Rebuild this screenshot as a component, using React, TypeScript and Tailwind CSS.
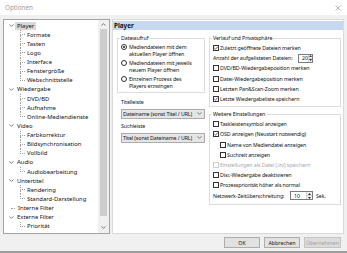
import React from 'react';

type Node = { label: string; children: string[]; selected?: boolean };

const tree: Node[] = [
  { label: 'Player', selected: true, children: ['Formate', 'Tasten', 'Logo', 'Interface', 'Fenstergröße', 'Webschnittstelle'] },
  { label: 'Wiedergabe', children: ['DVD/BD', 'Aufnahme', 'Online-Mediendienste'] },
  { label: 'Video', children: ['Farbkorrektur', 'Bildsynchronisation', 'Vollbild'] },
  { label: 'Audio', children: ['Audiobearbeitung'] },
  { label: 'Untertitel', children: ['Rendering', 'Standard-Darstellung'] },
  { label: 'Interne Filter', children: [] },
  { label: 'Externe Filter', children: ['Priorität'] },
];

function Chevron({ up }: { up?: boolean }) {
  return (
    <svg width="5" height="3" viewBox="0 0 5 3" className="block">
      <path d={up ? 'M0.5 2.6 L2.5 0.6 L4.5 2.6' : 'M0.5 0.4 L2.5 2.4 L4.5 0.4'} fill="none" stroke="#5a5a5a" strokeWidth="0.8" />
    </svg>
  );
}

function Check({ checked, disabled }: { checked?: boolean; disabled?: boolean }) {
  return (
    <span
      className={`flex h-[6px] w-[6px] shrink-0 items-center justify-center border bg-white ${
        disabled ? 'border-[#cfcfcf]' : 'border-[#333333]'
      }`}
    >
      {checked && (
        <svg width="4" height="4" viewBox="0 0 4 4" className="block">
          <path d="M0.3 2 L1.5 3.2 L3.7 0.7" fill="none" stroke="#222" strokeWidth="0.7" />
        </svg>
      )}
    </span>
  );
}

function Radio({ checked }: { checked?: boolean }) {
  return (
    <span className="mt-[0.5px] flex h-[6px] w-[6px] shrink-0 items-center justify-center rounded-full border border-[#333333] bg-white">
      {checked && <span className="h-[2.5px] w-[2.5px] rounded-full bg-[#222]" />}
    </span>
  );
}

function CheckRow({ label, checked, disabled, indent }: { label: string; checked?: boolean; disabled?: boolean; indent?: boolean }) {
  return (
    <div className={`flex h-[10.2px] items-center gap-[1px] ${indent ? 'pl-[8px]' : 'pl-[1px]'}`}>
      <Check checked={checked} disabled={disabled} />
      <span className={`whitespace-nowrap ${disabled ? 'text-[#a8a8a8]' : ''}`}>{label}</span>
    </div>
  );
}

function Spinner({ value, width }: { value: string; width: string }) {
  return (
    <div className={`flex h-[9px] ${width} items-center border border-[#7a7a7a] bg-white`}>
      <span className="flex-1 pl-[3px] text-left">{value}</span>
      <div className="flex h-full w-[6px] flex-col border-l border-[#d0d0d0] bg-[#f0f0f0]">
        <div className="flex flex-1 items-center justify-center border-b border-[#d0d0d0]">
          <svg width="3" height="2" viewBox="0 0 3 2" className="block"><path d="M0 2 L1.5 0 L3 2 Z" fill="#333" /></svg>
        </div>
        <div className="flex flex-1 items-center justify-center">
          <svg width="3" height="2" viewBox="0 0 3 2" className="block"><path d="M0 0 L1.5 2 L3 0 Z" fill="#333" /></svg>
        </div>
      </div>
    </div>
  );
}

function Dropdown({ text }: { text: string }) {
  return (
    <div className="ml-[4px] flex h-[10px] w-[84px] items-center justify-between border border-[#acacac] bg-[#e5e5e5] pl-[1px] pr-[2px]">
      <span className="whitespace-nowrap">{text}</span>
      <Chevron />
    </div>
  );
}

function Tree() {
  return (
    <div className="flex h-[215px] w-[107px] border border-[#a3a3a3] bg-white text-[5.9px]">
      <div className="flex flex-1 flex-col pt-[1px]">
        {tree.map((n) => (
          <React.Fragment key={n.label}>
            <div className="flex h-[9.14px] items-center">
              {n.children.length > 0 ? (
                <div className="ml-[5px] flex w-[5px] justify-center">
                  <Chevron />
                </div>
              ) : (
                <div className="ml-[7px] h-0 w-[4px] border-t border-dotted border-[#a0a0a0]" />
              )}
              <span
                className={`ml-[1px] whitespace-nowrap px-[2px] leading-[8px] ${n.selected ? 'bg-[#d9d9d9]' : ''}`}
              >
                {n.label}
              </span>
            </div>
            {n.children.map((c, i) => {
              const last = i === n.children.length - 1;
              return (
                <div key={c} className="flex h-[9.14px] items-stretch">
                  <div className="ml-[16px] flex w-[5px] flex-col">
                    <div className="flex-1 border-b border-l border-dotted border-[#a0a0a0]" />
                    <div className={`flex-1 ${last ? '' : 'border-l border-dotted border-[#a0a0a0]'}`} />
                  </div>
                  <span className="flex items-center whitespace-nowrap px-[2px]">{c}</span>
                </div>
              );
            })}
          </React.Fragment>
        ))}
      </div>
      <div className="flex w-[11px] flex-col bg-[#f0f0f0]">
        <div className="flex h-[9px] items-center justify-center">
          <Chevron up />
        </div>
        <div className="flex flex-1 flex-col px-[2px]">
          <div className="h-[187px] bg-[#cdcdcd]" />
        </div>
        <div className="flex h-[11px] items-center justify-center">
          <Chevron />
        </div>
      </div>
    </div>
  );
}

function Group({ title, children, className }: { title: string; children: React.ReactNode; className?: string }) {
  return (
    <fieldset className={`border border-[#dcdcdc] px-[2px] ${className ?? ''}`}>
      <legend className="px-[1px] leading-[8px]">{title}</legend>
      {children}
    </fieldset>
  );
}

export default function App() {
  return (
    <div className="flex h-[253px] w-[347px] flex-col overflow-hidden bg-[#f0f0f0] font-['Noto_Sans','Open_Sans',sans-serif] text-[5.3px] leading-[8px] text-[#111]">
      <div className="flex h-[15px] shrink-0 items-center justify-between bg-white pl-[5px] pr-[6px]">
        <span className="text-[6.3px] text-[#9a9a9a]">Optionen</span>
        <svg width="6" height="6" viewBox="0 0 6 6" className="block">
          <path d="M0.5 0.5 L5.5 5.5 M5.5 0.5 L0.5 5.5" stroke="#9a9a9a" strokeWidth="0.7" />
        </svg>
      </div>
      <div className="flex gap-[2px] pl-[3px] pt-[4px]">
        <Tree />
        <div className="flex h-[215px] w-[232px] flex-col border border-[#dadada] bg-white pt-[1px] tracking-[-0.1px]">
          <div className="flex h-[9px] items-center bg-[#c6d8f0] pl-[1px] text-[6.3px] font-bold tracking-normal">Player</div>
          <div className="flex gap-[4px] pl-[4px] pt-[4px]">
            <div className="flex w-[88px] flex-col">
              <Group title="Dateiaufruf" className="pb-[2px]">
                <div className="flex flex-col gap-[2px] pl-[1px] pt-[1.5px] leading-[7px]">
                  {[
                    ['Mediendateien mit dem', 'aktuellen Player öffnen', true],
                    ['Mediendateien mit jeweils', 'neuem Player öffnen', false],
                    ['Einzelnen Prozess des', 'Players erzwingen', false],
                  ].map(([a, b, c]) => (
                    <div key={a as string} className="flex gap-[2px]">
                      <Radio checked={c as boolean} />
                      <div className="flex flex-col whitespace-nowrap">
                        <span>{a as string}</span>
                        <span>{b as string}</span>
                      </div>
                    </div>
                  ))}
                </div>
              </Group>
              <div className="mt-[5px] pl-[4px]">Titelleiste</div>
              <div className="mt-[3px]">
                <Dropdown text="Dateiname (sonst Titel / URL)" />
              </div>
              <div className="mt-[3px] pl-[4px]">Suchleiste</div>
              <div className="mt-[3px]">
                <Dropdown text="Titel (sonst Dateiname / URL)" />
              </div>
            </div>
            <div className="flex w-[132px] flex-col">
              <Group title="Verlauf und Privatsphäre" className="pb-[2px] pt-[1px]">
                <CheckRow label="Zuletzt geöffnete Dateien merken" checked />
                <div className="flex h-[10.2px] items-center pl-[1px]">
                  <span className="w-[85px] whitespace-nowrap">Anzahl der aufgelisteten Dateien:</span>
                  <Spinner value="20" width="w-[15px]" />
                </div>
                <CheckRow label="DVD/BD-Wiedergabeposition merken" />
                <CheckRow label="Datei-Wiedergabeposition merken" />
                <CheckRow label="Letzten Pan&Scan-Zoom merken" />
                <CheckRow label="Letzte Wiedergabeliste speichern" checked />
              </Group>
              <Group title="Weitere Einstellungen" className="mt-[3px] pb-[3px] pt-[1px]">
                <CheckRow label="Taskleistensymbol anzeigen" />
                <CheckRow label="OSD anzeigen (Neustart notwendig)" checked />
                <CheckRow label="Name von Mediendatei anzeigen" indent />
                <CheckRow label="Suchzeit anzeigen" indent />
                <CheckRow label="Einstellungen als Datei (.ini) speichern" disabled />
                <CheckRow label="Disc-Wiedergabe deaktivieren" />
                <CheckRow label="Prozesspriorität höher als normal" />
                <div className="flex h-[10.2px] items-center pl-[1px]">
                  <span className="w-[77px] whitespace-nowrap">Netzwerk-Zeitüberschreitung:</span>
                  <Spinner value="10" width="w-[23px]" />
                  <span className="ml-[3px]">Sek.</span>
                </div>
              </Group>
            </div>
          </div>
        </div>
      </div>
      <div className="flex justify-end gap-[4px] pr-[6px] pt-[3px]">
        <div className="flex h-[11px] w-[36px] items-center justify-center border border-[#adadad] bg-[#e1e1e1]">OK</div>
        <div className="flex h-[11px] w-[36px] items-center justify-center border border-[#adadad] bg-[#e1e1e1]">Abbrechen</div>
        <div className="flex h-[11px] w-[37px] items-center justify-center border border-[#c4c4c4] bg-[#dcdcdc] text-[#a0a0a0]">Übernehmen</div>
      </div>
      <div className="mt-auto h-[2px] bg-[#9c9c9c]" />
    </div>
  );
}
